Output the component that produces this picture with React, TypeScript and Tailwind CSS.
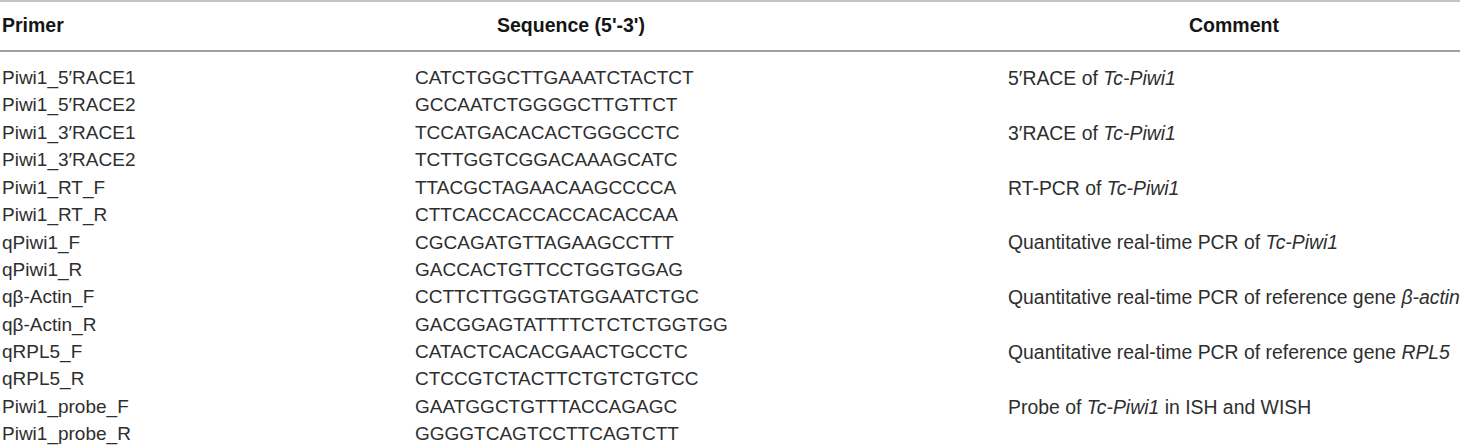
import React from "react";

type Row = {
  primer: string;
  seq: string;
  comment?: React.ReactNode;
};

const rows: Row[] = [
  { primer: "Piwi1_5′RACE1", seq: "CATCTGGCTTGAAATCTACTCT", comment: <>5′RACE of <i>Tc-Piwi1</i></> },
  { primer: "Piwi1_5′RACE2", seq: "GCCAATCTGGGGCTTGTTCT" },
  { primer: "Piwi1_3′RACE1", seq: "TCCATGACACACTGGGCCTC", comment: <>3′RACE of <i>Tc-Piwi1</i></> },
  { primer: "Piwi1_3′RACE2", seq: "TCTTGGTCGGACAAAGCATC" },
  { primer: "Piwi1_RT_F", seq: "TTACGCTAGAACAAGCCCCA", comment: <>RT-PCR of <i>Tc-Piwi1</i></> },
  { primer: "Piwi1_RT_R", seq: "CTTCACCACCACCACACCAA" },
  { primer: "qPiwi1_F", seq: "CGCAGATGTTAGAAGCCTTT", comment: <>Quantitative real-time PCR of <i>Tc-Piwi1</i></> },
  { primer: "qPiwi1_R", seq: "GACCACTGTTCCTGGTGGAG" },
  { primer: "qβ-Actin_F", seq: "CCTTCTTGGGTATGGAATCTGC", comment: <>Quantitative real-time PCR of reference gene <i>β-actin</i></> },
  { primer: "qβ-Actin_R", seq: "GACGGAGTATTTTCTCTCTGGTGG" },
  { primer: "qRPL5_F", seq: "CATACTCACACGAACTGCCTC", comment: <>Quantitative real-time PCR of reference gene <i>RPL5</i></> },
  { primer: "qRPL5_R", seq: "CTCCGTCTACTTCTGTCTGTCC" },
  { primer: "Piwi1_probe_F", seq: "GAATGGCTGTTTACCAGAGC", comment: <>Probe of <i>Tc-Piwi1</i> in ISH and WISH</> },
  { primer: "Piwi1_probe_R", seq: "GGGGTCAGTCCTTCAGTCTT" },
];

export default function App() {
  return (
    <div
      className="w-[1460px] h-[445px] overflow-hidden bg-white text-[#2e2e2e]"
      style={{ fontFamily: '"Liberation Sans", Arial, sans-serif' }}
    >
      {/* header */}
      <div className="border-t-2 border-b-2 border-t-[#c4c4c4] border-b-[#a0a0a0] grid grid-cols-[415px_593px_1fr] h-[52px] items-center text-[19.5px] font-bold text-[#151515]">
        <div className="pl-[2px]">Primer</div>
        <div className="pl-[82px]">Sequence (5'-3')</div>
        <div className="text-center">Comment</div>
      </div>

      {/* body */}
      <div className="pt-[12px] text-[19px] whitespace-nowrap">
        {rows.map((r) => (
          <div key={r.primer} className="grid grid-cols-[415px_593px_1fr] h-[27.4px] items-center">
            <div className="pl-[2px]">{r.primer}</div>
            <div>{r.seq}</div>
            <div className="text-[19.4px]">{r.comment}</div>
          </div>
        ))}
      </div>
    </div>
  );
}
